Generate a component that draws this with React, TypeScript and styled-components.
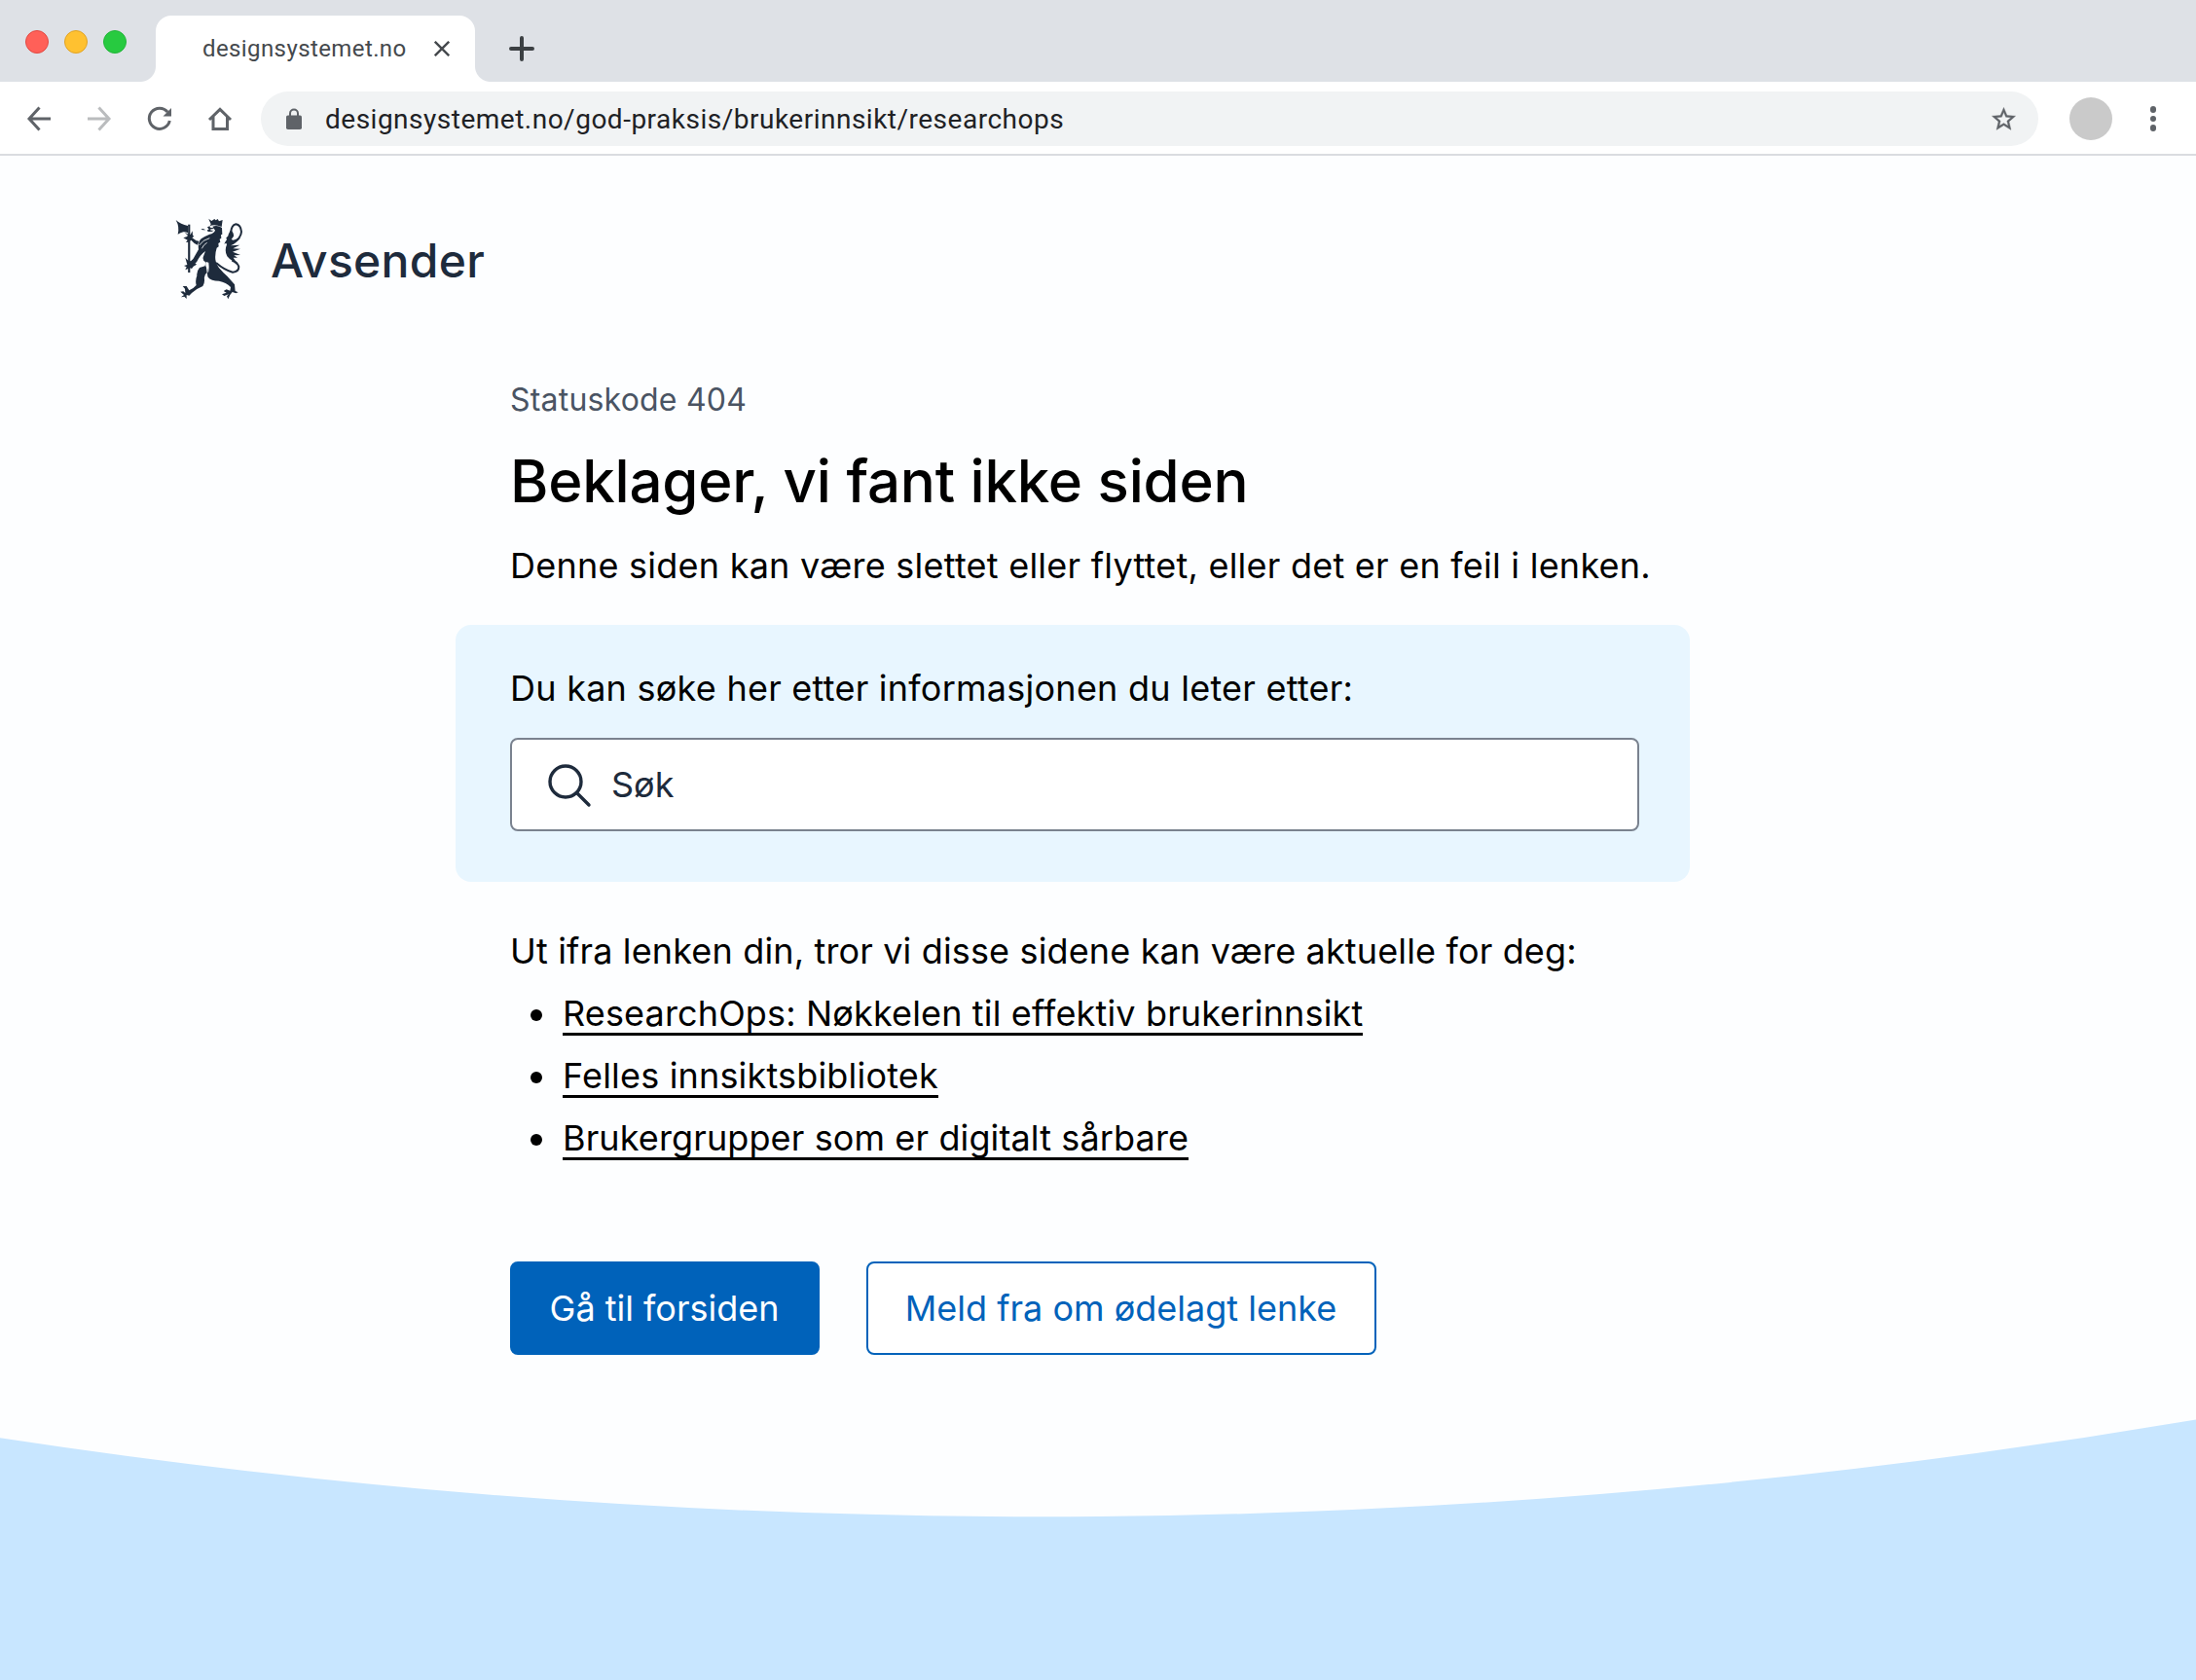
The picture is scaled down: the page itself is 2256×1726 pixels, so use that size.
import React from 'react';
import styled, { createGlobalStyle } from 'styled-components';

const GlobalStyle = createGlobalStyle`
  *, *::before, *::after { box-sizing: border-box; }
  html, body { margin: 0; padding: 0; }
  body { background: #fdfeff; font-family: Inter, "Liberation Sans", sans-serif; color: #000; }
  h1, p, ul { margin: 0; padding: 0; }
`;

const Window = styled.div`
  display: flex;
  flex-direction: column;
  width: 2256px;
  height: 1726px;
  overflow: hidden;
  background: #fdfeff;
`;

const TabStrip = styled.div`
  display: flex;
  align-items: flex-start;
  height: 84px;
  background: #dee1e6;
`;

const WindowControls = styled.div`
  display: flex;
  gap: 16px;
  width: 160px;
  padding: 31px 0 0 26px;
`;

const ControlDot = styled.span<{ $fill: string; $edge: string }>`
  width: 24px;
  height: 24px;
  border-radius: 50%;
  background: ${(p) => p.$fill};
  border: 1px solid ${(p) => p.$edge};
`;

const Tab = styled.div`
  position: relative;
  display: flex;
  align-items: center;
  justify-content: space-between;
  width: 328px;
  height: 68px;
  margin-top: 16px;
  padding: 0 26px 0 48px;
  border-radius: 16px 16px 0 0;
  background: #fff;
  &::before, &::after {
    content: '';
    position: absolute;
    bottom: 0;
    width: 16px;
    height: 16px;
  }
  &::before {
    left: -16px;
    background: radial-gradient(circle at 0 0, transparent 15.5px, #fff 16.5px);
  }
  &::after {
    right: -16px;
    background: radial-gradient(circle at 100% 0, transparent 15.5px, #fff 16.5px);
  }
`;

const TabTitle = styled.span`
  font: 400 24px/28px Roboto, sans-serif;
  letter-spacing: 0.4px;
  color: #45494d;
  white-space: nowrap;
`;

const NewTab = styled.div`
  display: flex;
  margin: 37px 0 0 35px;
`;

const Toolbar = styled.div`
  display: flex;
  align-items: center;
  height: 76px;
  background: #fff;
  border-bottom: 2px solid #dadce0;
`;

const NavIcons = styled.div`
  display: flex;
  gap: 22px;
  width: 268px;
  padding: 2px 0 0 20px;
`;

const NavIcon = styled.svg<{ $muted?: boolean }>`
  width: 40px;
  height: 40px;
  fill: none;
  stroke: ${(p) => (p.$muted ? '#babcbe' : '#5f6368')};
  stroke-width: 3;
`;

const AddressBar = styled.div`
  display: flex;
  align-items: center;
  width: 1826px;
  height: 56px;
  margin-top: 2px;
  padding: 0 21px 0 26px;
  border-radius: 28px;
  background: #f1f3f4;
`;

const Url = styled.span`
  flex: 1;
  margin: 1px 0 0 24px;
  font: 400 28px/32px Roboto, sans-serif;
  letter-spacing: 0.5px;
  color: #202124;
  white-space: nowrap;
`;

const Avatar = styled.span`
  width: 44px;
  height: 44px;
  margin: 2px 0 0 32px;
  border-radius: 50%;
  background: #cacaca;
`;

const MenuDots = styled.div`
  display: flex;
  flex-direction: column;
  gap: 3px;
  margin: 2px 0 0 39px;
`;

const MenuDot = styled.span`
  width: 6.4px;
  height: 6.4px;
  border-radius: 50%;
  background: #5f6368;
`;

const Page = styled.div`
  flex: 1;
  display: flex;
  flex-direction: column;
`;

const Brand = styled.header`
  display: flex;
  align-items: center;
  height: 90px;
  margin-top: 61px;
  padding-left: 178px;
`;

const BrandName = styled.span`
  margin: 3px 0 0 26px;
  font-size: 48px;
  font-weight: 500;
  line-height: 60px;
  letter-spacing: 0.3px;
  color: #1e2b3c;
`;

const Main = styled.main`
  width: 1268px;
  margin: 75px 0 0 468px;
`;

const Inset = styled.div`
  padding-left: 56px;
`;

const StatusCode = styled.p`
  font-size: 32px;
  line-height: 50px;
  letter-spacing: 0.2px;
  color: #4a5463;
`;

const Title = styled.h1`
  margin-top: 19px;
  font-size: 60px;
  font-weight: 500;
  line-height: 78px;
  letter-spacing: -0.23px;
  white-space: nowrap;
`;

const BodyText = styled.p<{ $tracking: number }>`
  font-size: 36px;
  line-height: 64px;
  letter-spacing: ${(p) => p.$tracking}px;
  white-space: nowrap;
`;

const Lead = styled(BodyText)`
  margin-top: 16px;
`;

const SearchPanel = styled.section`
  height: 264px;
  margin-top: 29px;
  padding: 33px 52px 0 56px;
  border-radius: 16px;
  background: #e8f6ff;
`;

const SearchField = styled.div`
  display: flex;
  align-items: center;
  height: 96px;
  margin-top: 19px;
  padding-left: 34px;
  border: 2px solid #7a828f;
  border-radius: 8px;
  background: #fff;
`;

const SearchIcon = styled.svg`
  width: 50px;
  height: 50px;
  margin-top: 2px;
  fill: none;
  stroke: #1e2b3c;
  stroke-width: 3.4;
  stroke-linecap: round;
`;

const Placeholder = styled.span`
  margin-left: 18px;
  font-size: 36px;
  color: #1e2b3c;
`;

const Suggestions = styled(Inset)`
  margin-top: 39px;
`;

const LinkList = styled.ul`
  list-style: none;
`;

const LinkItem = styled.li`
  display: flex;
  align-items: center;
  height: 64px;
  padding-left: 21px;
  &::before {
    content: '';
    width: 12px;
    height: 12px;
    margin: 4px 21px 0 0;
    border-radius: 50%;
    background: #000;
  }
`;

const PageLink = styled.a<{ $tracking: number }>`
  height: 45px;
  border-bottom: 3px solid #000;
  font-size: 36px;
  line-height: 44px;
  letter-spacing: ${(p) => p.$tracking}px;
  color: #000;
  text-decoration: none;
  white-space: nowrap;
`;

const Actions = styled(Inset)`
  display: flex;
  gap: 48px;
  margin-top: 95px;
`;

const Button = styled.button<{ $primary?: boolean; $width: number }>`
  width: ${(p) => p.$width}px;
  height: 96px;
  padding: 0 1px 0 0;
  border: 2px solid #0062ba;
  border-radius: 8px;
  background: ${(p) => (p.$primary ? '#0062ba' : '#fff')};
  color: ${(p) => (p.$primary ? '#fff' : '#0062ba')};
  font: 400 36px/44px Inter, sans-serif;
  white-space: nowrap;
`;

const Wave = styled.svg`
  display: block;
  margin-top: auto;
`;

const Lion = () => (
  <svg width="74" height="86" viewBox="39 39 222 258" fill="#1e2b3c">
    {/* axe */}
    <path d="M47 48Q62 62 84 66V88Q77 84 70 85Q61 87 53 92Q59 69 47 48Z" />
    <path d="M84.500 62H91V210H84.500Z" />
    {/* upper paw and arm */}
    <path d="M74 86Q82 92 92 93L98 82L99 95L103 98L97 103L110 112L118 113L114 125Q104 122 94 110L86 116L78 117L83 110L70 103L80 100L84 96Z" />
    {/* lower paw */}
    <path d="M76 164L85 173L93 175L101 167L101 176L111 185L101 191L96 198L90 196L76 202L80 193L72 189L82 186Z" />
    {/* crown */}
    <path d="M148 44L157 51L166 45L170 49L176 45L180 52L191 48L188 69Q168 60 152 66L155 61L151 52Z" />
    {/* tongue and muzzle */}
    <path d="M124 76L131 75L139 79L130 79Z" />
    <path d="M144 70L152 67Q150 73 158 72L166 73L160 76L152 76Q158 81 165 78L159 84L146 84L143 79L149 78Z" />
    {/* head, mane, torso and forelegs */}
    <path d="M160 68Q176 63 189 72L190 92L186 94L187 104L182 107L184 116L178 120L179 130L173 134Q167 152 169 170Q171 186 185 201Q193 211 206 222L228 247L230 267L239 271L232 274L221 270L214 279L208 292L204 283L210 277L196 282L189 277L203 272L194 267L203 262L214 266L216 255Q202 240 180 236Q155 236 146 224Q142 214 146 200Q149 188 148 179L141 178Q136 184 141 194L143 211Q133 217 135 230Q136 243 130 252Q112 259 96 273L88 281L80 279L80 291L73 284L63 286L72 279L61 269L70 268L76 273L75 260L68 252L80 252L88 265Q104 257 110 249Q106 235 112 220Q110 207 120 195L137 190L139 178Q129 173 131 163L138 144Q122 155 111 178L101 185L97 174Q106 158 117 139Q114 116 125 106Q138 97 151 92Q164 89 168 80Z" />
    {/* tail */}
    <path d="M171 180Q196 202 222 209Q241 208 241 192Q238 181 220 173" fill="none" stroke="#1e2b3c" strokeWidth="6" />
    <path d="M217 86Q218 64 232 61Q247 63 249 84Q248 104 225 116" fill="none" stroke="#1e2b3c" strokeWidth="6" />
    <path d="M215 80Q226 84 225 98L218 108L224 110L247 103Q233 120 216 127L244 125L223 136L246 137L222 146L246 156L226 157L237 164L224 164L230 173L241 182Q218 176 205 160Q196 144 204 124L202 119L196 122Q199 115 204 109L202 103Q210 98 209 92Z" />
    {/* light contour lines inside the body */}
    <g fill="none" stroke="#fdfeff" strokeWidth="2.5">
      <path d="M119 126Q130 109 151 104" />
      <path d="M142 178Q151 188 146 209" />
      <path d="M143 118Q132 124 127 136" />
      <path d="M154 80H166" />
    </g>
  </svg>
);

export default function App() {
  return (
    <>
      <GlobalStyle />
      <Window>
        <TabStrip>
          <WindowControls>
            <ControlDot $fill="#ff6058" $edge="#e14942" />
            <ControlDot $fill="#ffc130" $edge="#e0a325" />
            <ControlDot $fill="#27ca40" $edge="#23b53a" />
          </WindowControls>
          <Tab>
            <TabTitle>designsystemet.no</TabTitle>
            <svg width="16" height="16" viewBox="0 0 16 16" fill="none" stroke="#45494d" strokeWidth="2.4">
              <path d="M.8.8l14.400 14.400M15.200.8L.8 15.200" />
            </svg>
          </Tab>
          <NewTab>
            <svg width="26" height="26" viewBox="0 0 26 26" fill="none" stroke="#3c4043" strokeWidth="4" strokeLinecap="round">
              <path d="M13 2v22M2 13h22" />
            </svg>
          </NewTab>
        </TabStrip>
        <Toolbar>
          <NavIcons>
            <NavIcon viewBox="0 0 40 40">
              <path d="M32 20H10M20.500 8.500L10 20L20.500 31.500" />
            </NavIcon>
            <NavIcon viewBox="0 0 40 40" $muted>
              <path d="M8 20H30M19.500 8.500L30 20L19.500 31.500" />
            </NavIcon>
            <NavIcon viewBox="0 0 40 40">
              <path d="M28.200 13.100A10.600 10.600 0 1 0 30.300 22" />
              <path d="M32 9V17.500H23.500Z" fill="#5f6368" stroke="none" />
            </NavIcon>
            <NavIcon viewBox="0 0 40 40">
              <path d="M9 21L20 10.300L31 21M13 17.500V30.500H27.500V17.500" />
            </NavIcon>
          </NavIcons>
          <AddressBar>
            <svg width="16" height="22" viewBox="0 0 16 22">
              <rect y="7.500" width="16" height="14.500" rx="1.800" fill="#5f6368" />
              <path d="M4 8V5.500a4 4 0 0 1 8 0V8" fill="none" stroke="#5f6368" strokeWidth="2" />
            </svg>
            <Url>designsystemet.no/god-praksis/brukerinnsikt/researchops</Url>
            <svg width="29" height="29" viewBox="0 0 24 24" fill="#5f6368" stroke="#5f6368" strokeWidth="0.3">
              <path d="M22 9.240l-7.190-.62L12 2 9.190 8.630 2 9.240l5.460 4.730L5.820 21 12 17.270 18.180 21l-1.630-7.030L22 9.240zM12 15.400l-3.760 2.270 1-4.280-3.320-2.880 4.380-.38L12 6.100l1.710 4.040 4.380.38-3.320 2.880 1 4.280L12 15.400z" />
            </svg>
          </AddressBar>
          <Avatar />
          <MenuDots>
            <MenuDot />
            <MenuDot />
            <MenuDot />
          </MenuDots>
        </Toolbar>
        <Page>
          <Brand>
            <Lion />
            <BrandName>Avsender</BrandName>
          </Brand>
          <Main>
            <Inset>
              <StatusCode>Statuskode 404</StatusCode>
              <Title>Beklager, vi fant ikke siden</Title>
              <Lead $tracking={0.24}>Denne siden kan være slettet eller flyttet, eller det er en feil i lenken.</Lead>
            </Inset>
            <SearchPanel>
              <BodyText $tracking={0.25}>Du kan søke her etter informasjonen du leter etter:</BodyText>
              <SearchField>
                <SearchIcon viewBox="0 0 50 50">
                  <circle cx="21" cy="21" r="16" />
                  <path d="M32.500 32.500L45 45" />
                </SearchIcon>
                <Placeholder>Søk</Placeholder>
              </SearchField>
            </SearchPanel>
            <Suggestions>
              <BodyText $tracking={0.15}>Ut ifra lenken din, tror vi disse sidene kan være aktuelle for deg:</BodyText>
              <LinkList>
                <LinkItem><PageLink $tracking={0.15}>ResearchOps: Nøkkelen til effektiv brukerinnsikt</PageLink></LinkItem>
                <LinkItem><PageLink $tracking={0.18}>Felles innsiktsbibliotek</PageLink></LinkItem>
                <LinkItem><PageLink $tracking={0.12}>Brukergrupper som er digitalt sårbare</PageLink></LinkItem>
              </LinkList>
            </Suggestions>
            <Actions>
              <Button $primary $width={318}>Gå til forsiden</Button>
              <Button $width={524}>Meld fra om ødelagt lenke</Button>
            </Actions>
          </Main>
          <Wave width="2256" height="268" viewBox="0 0 2256 268">
            <path d="M0 19.300A7110 7110 0 0 0 2256 .5V268H0Z" fill="#c8e6ff" />
          </Wave>
        </Page>
      </Window>
    </>
  );
}
